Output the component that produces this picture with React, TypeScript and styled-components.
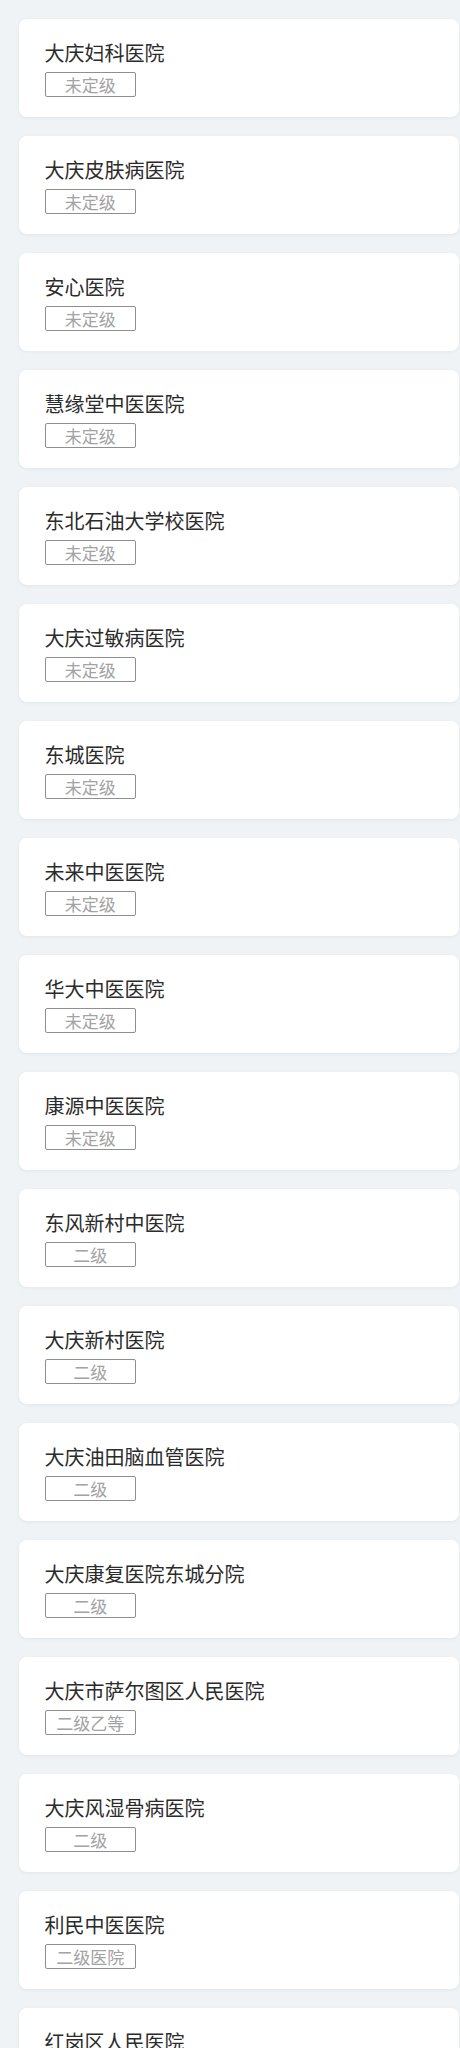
import React from "react";
import styled, { createGlobalStyle } from "styled-components";

const Global = createGlobalStyle`
  html, body {
    margin: 0;
    padding: 0;
    background: #eff3f6;
  }
  body {
    font-family: "Noto Sans CJK SC", "Noto Sans", sans-serif;
  }
`;

const List = styled.div`
  display: flex;
  flex-direction: column;
  gap: 19px;
  padding: 19px 1.5px 19px 18.5px;
  background: #eff3f6;
`;

const Card = styled.div`
  box-sizing: border-box;
  height: 98px;
  background: #ffffff;
  border-radius: 8px;
  box-shadow: 0 1px 3px rgba(180, 190, 200, 0.25);
  padding: 20px 0 20px 26px;
  display: flex;
  flex-direction: column;
  align-items: flex-start;
`;

const Title = styled.div`
  font-size: 20px;
  line-height: 28px;
  color: #2b2b2b;
  margin-bottom: 5px;
  white-space: nowrap;
`;

const Tag = styled.div`
  box-sizing: border-box;
  width: 91.5px;
  height: 25.5px;
  border: 1px solid #8f8f8f;
  border-radius: 2px;
  display: flex;
  align-items: center;
  justify-content: center;
  font-size: 17px;
  color: #a3a3a3;
  line-height: 1;
`;

const items: [string, string][] = [
  ["大庆妇科医院", "未定级"],
  ["大庆皮肤病医院", "未定级"],
  ["安心医院", "未定级"],
  ["慧缘堂中医医院", "未定级"],
  ["东北石油大学校医院", "未定级"],
  ["大庆过敏病医院", "未定级"],
  ["东城医院", "未定级"],
  ["未来中医医院", "未定级"],
  ["华大中医医院", "未定级"],
  ["康源中医医院", "未定级"],
  ["东风新村中医院", "二级"],
  ["大庆新村医院", "二级"],
  ["大庆油田脑血管医院", "二级"],
  ["大庆康复医院东城分院", "二级"],
  ["大庆市萨尔图区人民医院", "二级乙等"],
  ["大庆风湿骨病医院", "二级"],
  ["利民中医医院", "二级医院"],
  ["红岗区人民医院", "二级"],
];

export default function App() {
  return (
    <>
      <Global />
      <List>
        {items.map(([name, level]) => (
          <Card key={name}>
            <Title>{name}</Title>
            <Tag>{level}</Tag>
          </Card>
        ))}
      </List>
    </>
  );
}
